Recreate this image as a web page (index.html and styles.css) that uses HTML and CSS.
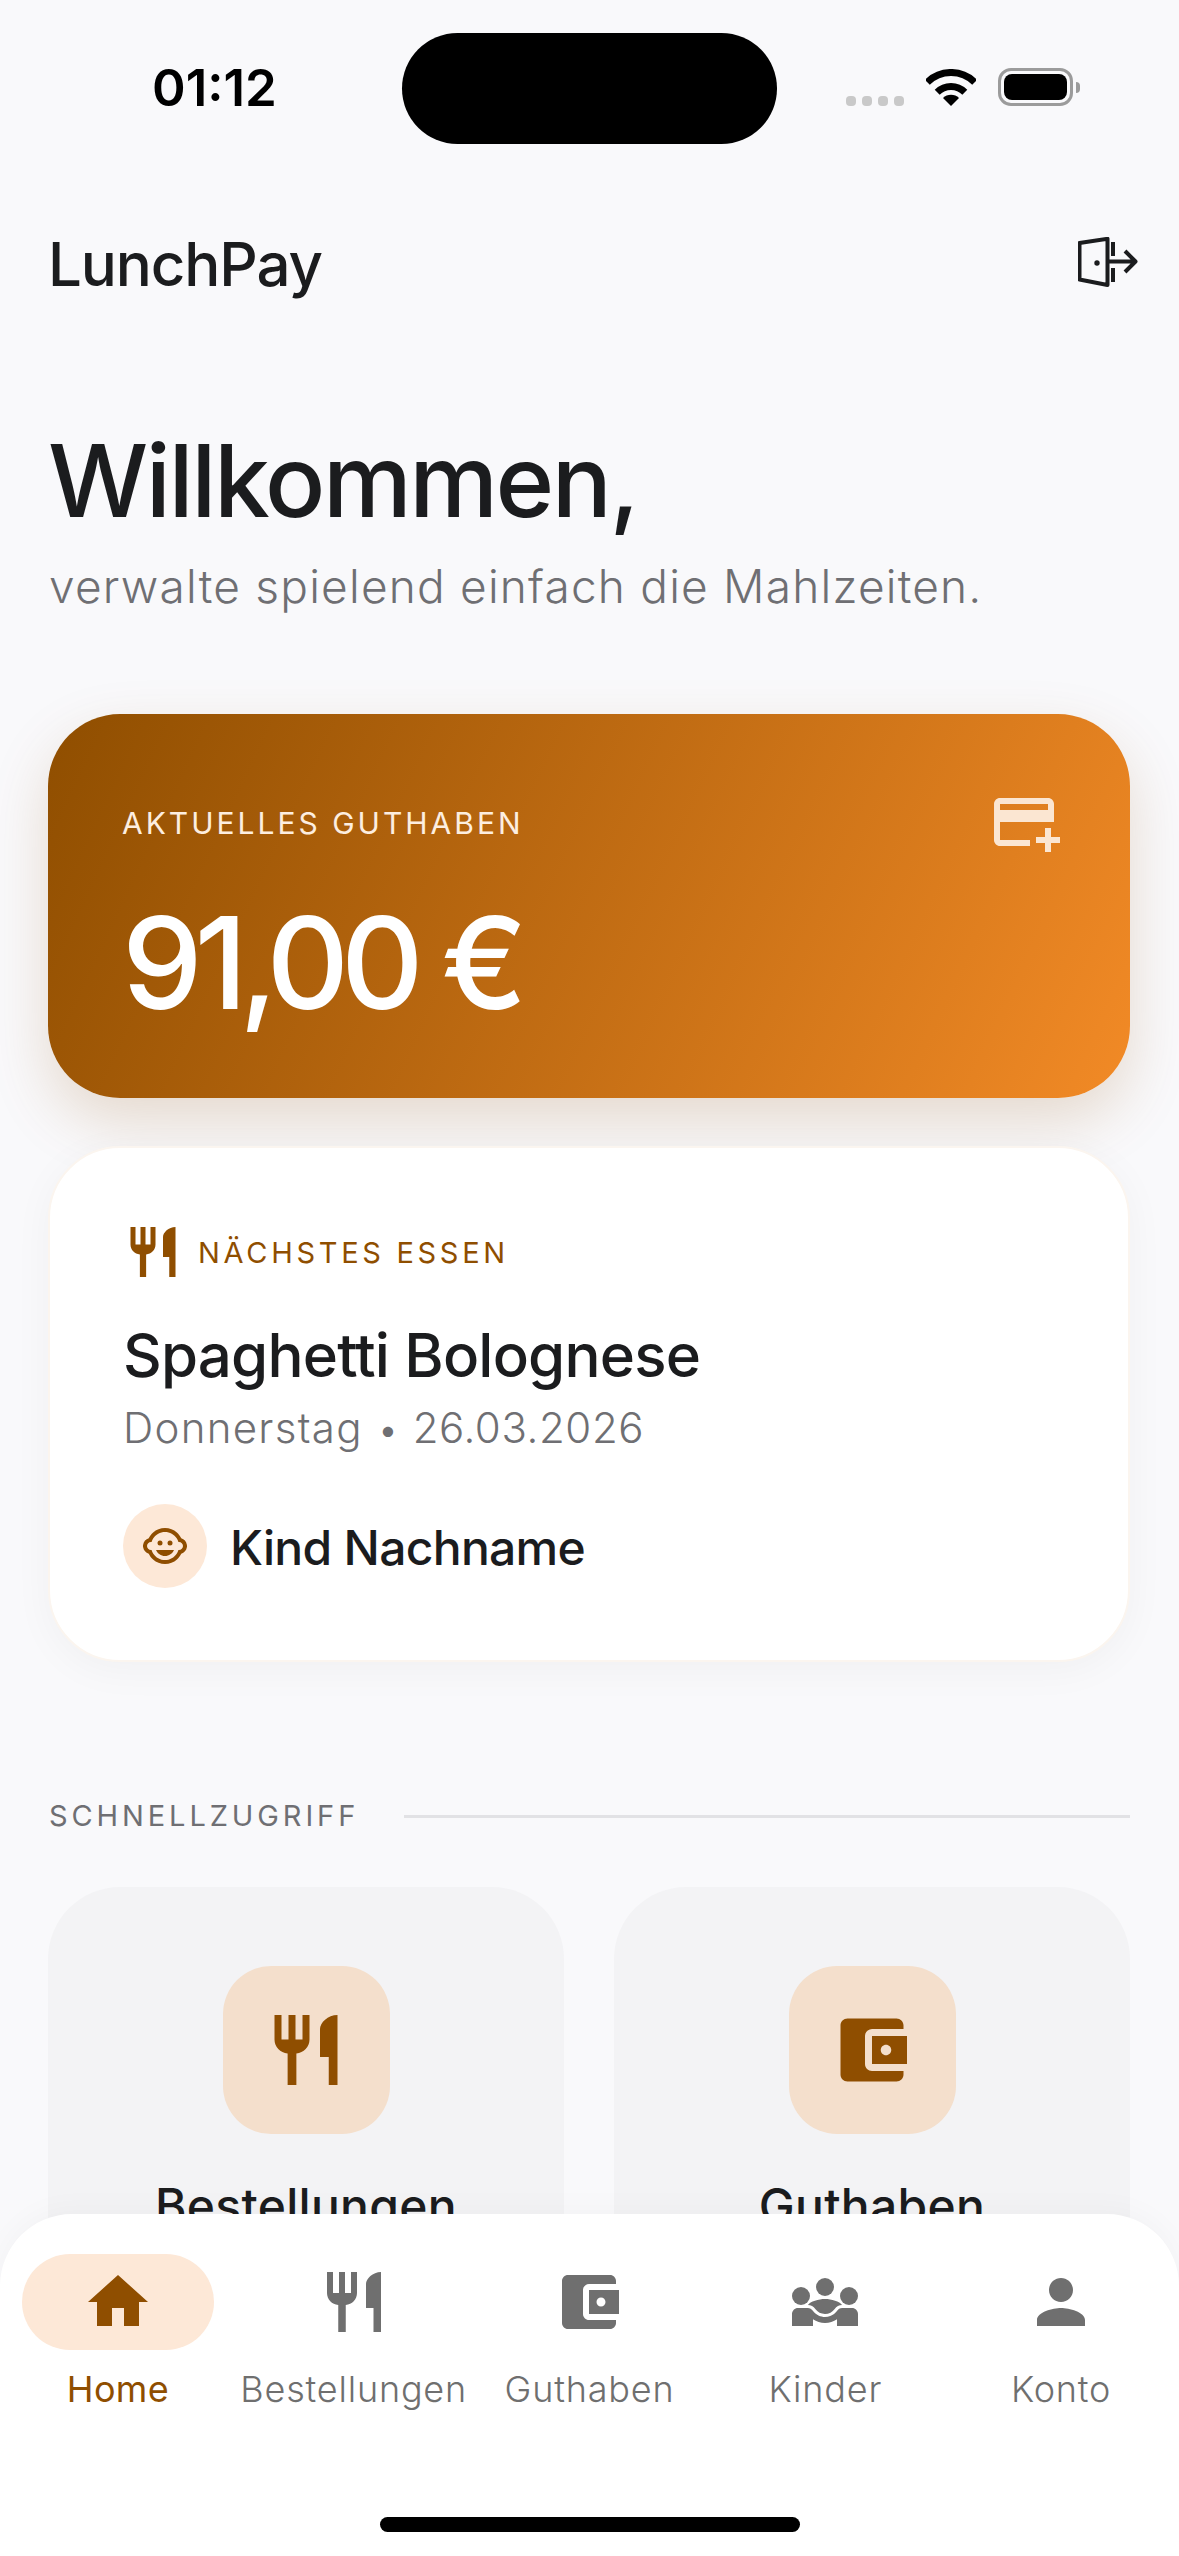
FILE: index.html
```html
<!DOCTYPE html>
<html lang="de">
<head>
  <meta charset="UTF-8" />
  <meta name="viewport" content="width=device-width, initial-scale=1" />
  <title>LunchPay</title>
  <link rel="stylesheet" href="styles.css">
</head>
<body>
  <svg class="defs" aria-hidden="true">
    <symbol id="i-restaurant" viewBox="0 0 24 24"><path d="M11 9H9V2H7v7H5V2H3v7c0 2.12 1.66 3.84 3.75 3.97V22h2.5v-9.03C11.34 12.84 13 11.12 13 9V2h-2v7zm5-3v8h2.5v8H21V2c-2.76 0-5 2.24-5 4z"/></symbol>
    <symbol id="i-wallet" viewBox="0 0 24 24"><path d="M21 18v1c0 1.1-.9 2-2 2H5c-1.11 0-2-.9-2-2V5c0-1.1.89-2 2-2h14c1.1 0 2 .9 2 2v1h-9c-1.11 0-2 .9-2 2v8c0 1.1.89 2 2 2h9zm-9-2h10V8H12v8zm4-2.5c-.83 0-1.5-.67-1.5-1.5s.67-1.5 1.5-1.5 1.5.67 1.5 1.5-.67 1.5-1.5 1.5z"/></symbol>
    <symbol id="i-home" viewBox="0 0 24 24"><path d="M10 20v-6h4v6h5v-8h3L12 3 2 12h3v8z"/></symbol>
    <symbol id="i-group" viewBox="0 0 24 24"><path d="M6.32 13.01c.96.02 1.85.5 2.45 1.34C9.5 15.38 10.71 16 12 16c1.29 0 2.5-.62 3.23-1.66.6-.84 1.49-1.32 2.45-1.34C16.96 11.78 14.08 11 12 11c-2.07 0-4.96.78-5.68 2.01z"/><circle cx="4" cy="10" r="3"/><circle cx="20" cy="10" r="3"/><circle cx="12" cy="7" r="3"/><path d="M21 14h-3.27c-.77 0-1.35.45-1.68.92C16.01 14.98 14.69 17 12 17c-1.43 0-3.03-.64-4.05-2.08C7.56 14.37 6.95 14 6.27 14H3c-1.1 0-2 .9-2 2v4h7v-2.26c1.15.8 2.54 1.26 4 1.26s2.85-.46 4-1.26V20h7v-4c0-1.1-.9-2-2-2z"/></symbol>
    <symbol id="i-person" viewBox="0 0 24 24"><path d="M12 12c2.21 0 4-1.79 4-4s-1.79-4-4-4-4 1.79-4 4 1.79 4 4 4zm0 2c-2.67 0-8 1.34-8 4v2h16v-2c0-2.66-5.33-4-8-4z"/></symbol>
  </svg>

  <div class="status">
    <span class="time">01:12</span>
    <div class="island"></div>
    <div class="dots"><i></i><i></i><i></i><i></i></div>
    <svg class="wifi" viewBox="0 0 50 38">
      <path class="wifi-arc" d="M1.3 13.3a33.5 33.5 0 0 1 47.4 0"/>
      <path class="wifi-arc" d="M11.2 23.2a19.5 19.5 0 0 1 27.6 0"/>
      <path d="M25 37l-8-8a11.3 11.3 0 0 1 16 0z"/>
    </svg>
    <div class="battery"><div class="battery-fill"></div></div>
    <div class="battery-nib"></div>
  </div>

  <main class="page">
    <header class="topbar">
      <span class="brand">LunchPay</span>
      <svg class="logout" viewBox="0 0 60 50">
        <path d="M1.5 6L29.5 1.8V48L1.5 42.5z"/>
        <path d="M35 5v14M35 31v14M29 24.500h28M47 14l10.500 10.500L47 35"/>
        <circle class="logout-dot" cx="19" cy="26" r="2.700"/>
      </svg>
    </header>

    <h1 class="title">Willkommen,</h1>
    <p class="subtitle">verwalte spielend einfach die Mahlzeiten.</p>

    <section class="balance">
      <div>
        <div class="balance-label">AKTUELLES GUTHABEN</div>
        <div class="balance-value">91,00 €</div>
      </div>
      <svg class="balance-add" viewBox="0 0 24 24"><path d="M20 4H4c-1.110 0-1.990.890-1.990 2L2 18c0 1.110.890 2 2 2h10v-2H4v-6h18V6c0-1.110-.890-2-2-2zm0 4H4V6h16v2zm4 9v2h-3v3h-2v-3h-3v-2h3v-3h2v3h3z"/></svg>
    </section>

    <section class="next">
      <div class="next-head">
        <svg class="icon-60"><use href="#i-restaurant"/></svg>
        <span class="next-label">NÄCHSTES ESSEN</span>
      </div>
      <div class="next-meal">Spaghetti Bolognese</div>
      <div class="next-date"><span class="day">Donnerstag</span> <span class="sep">•</span> 26.03.2026</div>
      <div class="child">
        <div class="child-avatar">
          <svg class="icon-48" viewBox="0 0 24 24"><circle cx="14.500" cy="10.500" r="1.250"/><circle cx="9.500" cy="10.500" r="1.250"/><path d="M22.940 12.660c.040-.210.060-.430.060-.660s-.020-.450-.060-.660c-.250-1.510-1.360-2.740-2.810-3.170-.530-1.120-1.280-2.100-2.190-2.910C16.360 3.850 14.280 3 12 3s-4.360.850-5.940 2.260c-.920.810-1.670 1.800-2.190 2.910-1.450.430-2.560 1.650-2.810 3.170-.040.210-.060.430-.060.660s.020.450.060.660c.250 1.510 1.360 2.740 2.810 3.170.520 1.110 1.270 2.090 2.170 2.890C7.620 20.140 9.710 21 12 21s4.380-.860 5.970-2.280c.900-.800 1.650-1.790 2.170-2.890 1.440-.430 2.550-1.650 2.800-3.170zM19 14c-.100 0-.190-.020-.290-.030-.200.670-.490 1.290-.860 1.860C16.600 17.740 14.450 19 12 19s-4.600-1.260-5.850-3.170c-.370-.570-.660-1.190-.860-1.860-.100.010-.190.030-.290.030-1.100 0-2-.900-2-2s.900-2 2-2c.100 0 .190.020.290.030.200-.670.490-1.290.860-1.860C7.400 6.260 9.550 5 12 5s4.600 1.260 5.850 3.170c.370.570.660 1.190.860 1.860.100-.010.190-.030.290-.030 1.100 0 2 .900 2 2s-.900 2-2 2zM7.500 14c.760 1.770 2.490 3 4.500 3s3.740-1.230 4.500-3h-9z"/></svg>
        </div>
        <span class="child-name">Kind Nachname</span>
      </div>
    </section>

    <div class="section-head">
      <span class="section-title">SCHNELLZUGRIFF</span>
      <div class="section-line"></div>
    </div>

    <div class="tiles">
      <div class="tile">
        <div class="tile-icon"><svg class="icon-84"><use href="#i-restaurant"/></svg></div>
        <div class="tile-label">Bestellungen</div>
      </div>
      <div class="tile">
        <div class="tile-icon"><svg class="icon-84"><use href="#i-wallet"/></svg></div>
        <div class="tile-label">Guthaben</div>
      </div>
    </div>
  </main>

  <nav class="tabbar">
    <div class="tabs">
      <div class="tab active">
        <div class="tab-pill"><svg class="icon-72"><use href="#i-home"/></svg></div>
        <span>Home</span>
      </div>
      <div class="tab">
        <div class="tab-pill"><svg class="icon-72"><use href="#i-restaurant"/></svg></div>
        <span>Bestellungen</span>
      </div>
      <div class="tab">
        <div class="tab-pill"><svg class="icon-72"><use href="#i-wallet"/></svg></div>
        <span>Guthaben</span>
      </div>
      <div class="tab">
        <div class="tab-pill"><svg class="icon-72"><use href="#i-group"/></svg></div>
        <span>Kinder</span>
      </div>
      <div class="tab">
        <div class="tab-pill"><svg class="icon-72"><use href="#i-person"/></svg></div>
        <span>Konto</span>
      </div>
    </div>
    <div class="home-indicator"></div>
  </nav>
</body>
</html>
```

FILE: styles.css
```css
* {
  box-sizing: border-box;
}
html, body {
  margin: 0;
  height: 2556px;
  overflow: hidden;
}
body {
  position: relative;
  font-family: Inter, "Noto Sans", sans-serif;
  background-color: #f9f9fb;
  color: #1b1c1e;
}
.defs {
  display: none;
}
svg {
  display: block;
  fill: currentColor;
}
.icon-48 { width: 48px; height: 48px; }
.icon-60 { width: 60px; height: 60px; }
.icon-72 { width: 72px; height: 72px; }
.icon-84 { width: 84px; height: 84px; }

/* status bar */
.status {
  display: flex;
  height: 176px;
  padding: 33px 0 0 152px;
  color: #000;
}
.time {
  width: 250px;
  font-size: 51px;
  font-weight: 600;
  line-height: 110px;
}
.island {
  width: 375px;
  height: 111px;
  background: #000;
  border-radius: 56px;
}
.dots {
  display: flex;
  gap: 6px;
  margin: 63px 0 0 69px;
}
.dots i {
  width: 10px;
  height: 10px;
  background: #c9c9c9;
  border-radius: 4px;
}
.wifi {
  width: 50px;
  height: 38px;
  margin: 36px 0 0 22px;
}
.wifi-arc {
  fill: none;
  stroke: #000;
  stroke-width: 7;
}
.battery {
  width: 75px;
  height: 38px;
  margin: 35px 0 0 22px;
  padding: 3px;
  border: 3px solid #9b9b9b;
  border-radius: 13px;
}
.battery-fill {
  height: 100%;
  background: #000;
  border-radius: 8px;
}
.battery-nib {
  width: 4px;
  height: 11px;
  margin: 49px 0 0 3px;
  background: #9b9b9b;
  border-radius: 0 4px 4px 0;
}

/* page */
.page {
  padding: 0 49px 0 48px;
}
.topbar {
  display: flex;
  justify-content: space-between;
  align-items: center;
  height: 176px;
}
.brand {
  font-size: 60px;
  font-weight: 450;
  letter-spacing: -1.100px;
}
.logout {
  width: 60px;
  height: 50px;
  margin: -4px -8px 0 0;
}
.logout path {
  fill: none;
  stroke: #1b1c1e;
  stroke-width: 4;
  stroke-linejoin: round;
}
.logout .logout-dot {
  fill: #1b1c1e;
}
.title {
  margin: 67px 0 0 0;
  font-size: 100px;
  font-weight: 500;
  line-height: 124px;
  letter-spacing: -2.500px;
}
.subtitle {
  margin: 13px 0 0 1px;
  font-size: 46px;
  font-weight: 300;
  line-height: 60px;
  letter-spacing: 1.200px;
  color: #6f6f73;
}

/* balance card */
.balance {
  display: flex;
  justify-content: space-between;
  align-items: flex-start;
  height: 384px;
  margin-top: 98px;
  padding: 89px 70px 0 74px;
  color: #fff;
  background: linear-gradient(115deg, #8f4e00 0%, #f28a26 100%);
  border-radius: 72px;
  box-shadow: 0 24px 60px rgba(143, 78, 0, 0.18);
}
.balance-label {
  font-size: 30px;
  line-height: 40px;
  letter-spacing: 3px;
  color: #fdeee0;
}
.balance-value {
  margin-top: 45px;
  font-size: 128px;
  font-weight: 500;
  line-height: 150px;
  letter-spacing: -8.200px;
}
.balance-add {
  width: 72px;
  height: 72px;
  margin-top: -17px;
  color: #fbe6d2;
}

/* next meal */
.next {
  height: 516px;
  margin-top: 48px;
  padding: 74px 72px 0 73px;
  background: #fff;
  border: 2px solid #fbf5ef;
  border-radius: 72px;
  box-shadow: 0 8px 40px rgba(0, 0, 0, 0.04);
}
.next-head {
  display: flex;
  align-items: center;
  gap: 15px;
  color: #8f4e00;
}
.next-label {
  font-size: 29px;
  letter-spacing: 3.700px;
}
.next-meal {
  margin-top: 35px;
  font-size: 60px;
  font-weight: 450;
  line-height: 76px;
  letter-spacing: -0.800px;
}
.next-date {
  margin-top: 7px;
  font-size: 42px;
  font-weight: 300;
  line-height: 56px;
  letter-spacing: 0.600px;
  color: #6f6f73;
}
.day {
  letter-spacing: 1.300px;
}
.sep {
  margin: 0 1px 0 2px;
  font-size: 38px;
}
.child {
  display: flex;
  align-items: center;
  gap: 23px;
  margin-top: 47px;
}
.child-avatar {
  display: flex;
  align-items: center;
  justify-content: center;
  width: 84px;
  height: 84px;
  color: #8f4e00;
  background: #fde8d7;
  border-radius: 50%;
}
.child-name {
  margin-top: 2px;
  font-size: 48px;
  font-weight: 450;
  letter-spacing: -0.700px;
}

/* quick access */
.section-head {
  display: flex;
  align-items: center;
  gap: 45px;
  margin: 136px 0 0 1px;
}
.section-title {
  font-size: 29px;
  letter-spacing: 3.900px;
  line-height: 36px;
  color: #6f6f73;
}
.section-line {
  flex: 1;
  height: 3px;
  background: #e2e2e5;
}
.tiles {
  display: grid;
  grid-template-columns: 1fr 1fr;
  gap: 50px;
  margin-top: 53px;
}
.tile {
  display: flex;
  flex-direction: column;
  align-items: center;
  height: 440px;
  padding-top: 79px;
  background: #f3f3f5;
  border-radius: 72px;
}
.tile-icon {
  display: flex;
  align-items: center;
  justify-content: center;
  width: 167px;
  height: 168px;
  color: #8f4e00;
  background: #f4dfcc;
  border-radius: 48px;
}
.tile-label {
  margin-top: 42px;
  font-size: 48px;
  font-weight: 450;
  letter-spacing: 0.300px;
}

/* bottom nav */
.tabbar {
  position: absolute;
  left: 0;
  right: 0;
  bottom: 0;
  height: 342px;
  padding-top: 40px;
  background: #fff;
  border-radius: 72px 72px 0 0;
  box-shadow: 0 -4px 30px rgba(0, 0, 0, 0.03);
}
.tabs {
  display: grid;
  grid-template-columns: repeat(5, 1fr);
}
.tab {
  display: flex;
  flex-direction: column;
  align-items: center;
  font-size: 36px;
  font-weight: 300;
  line-height: 44px;
  letter-spacing: 0.800px;
  color: #6f6f6f;
}
.tab-pill {
  display: flex;
  align-items: center;
  justify-content: center;
  width: 192px;
  height: 96px;
  margin-bottom: 17px;
  border-radius: 48px;
}
.tab.active {
  font-weight: 400;
  letter-spacing: 0.300px;
  color: #8f4e00;
}
.tab.active .tab-pill {
  background: #fde8d7;
}
.home-indicator {
  width: 420px;
  height: 15px;
  margin: 106px auto 0;
  background: #000;
  border-radius: 8px;
}
```
